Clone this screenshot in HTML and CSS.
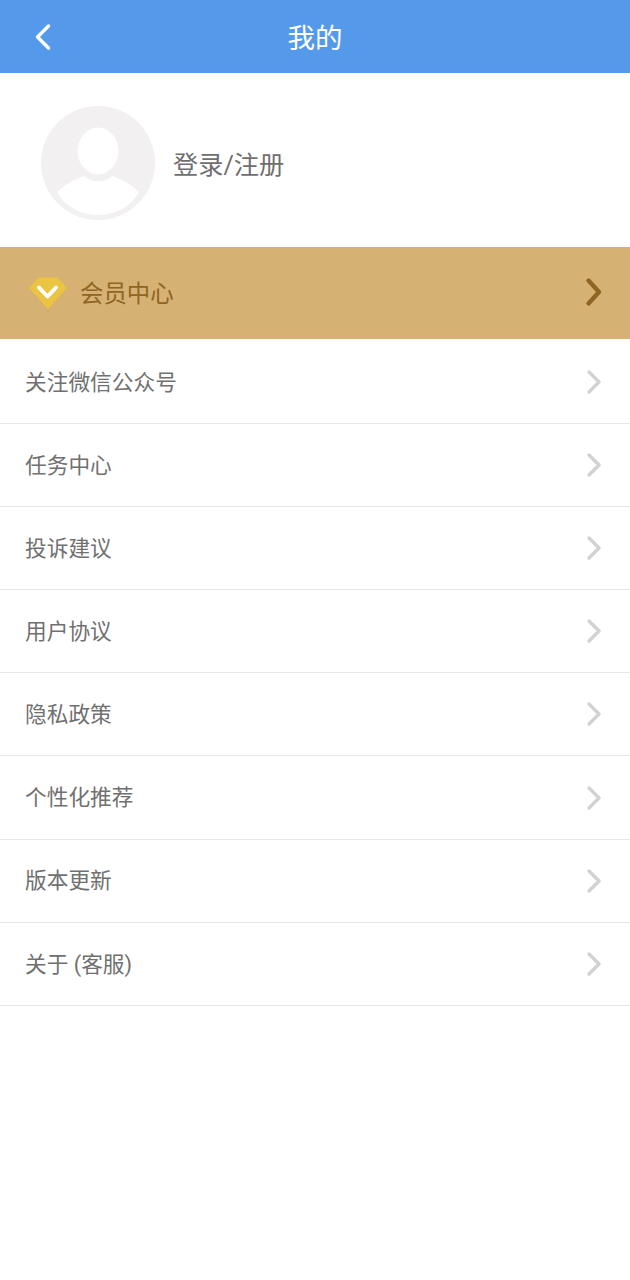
FILE: index.html
```html
<!DOCTYPE html>
<html lang="zh">
<head>
  <meta charset="UTF-8">
  <title>我的</title>
  <link rel="stylesheet" href="styles.css">
</head>
<body>

  <header class="topbar">
    <svg class="back" width="18" height="28" viewBox="0 0 18 28">
      <path d="M14.5 3 L3.5 14 L14.5 25" fill="none" stroke="#fff" stroke-width="3.4" stroke-linecap="round" stroke-linejoin="round"/>
    </svg>
    <h1>我的</h1>
  </header>

  <section class="profile">
    <svg class="avatar" width="116" height="116" viewBox="0 0 116 116">
      <circle cx="58" cy="58" r="57" fill="#f2f0f0"/>
      <ellipse cx="58" cy="46" rx="20.5" ry="23.5" fill="#fff"/>
      <path d="M17 87 C25 79 35 74 44 71 C50 78 66 78 72 71 C81 74 91 79 99 87 C91 102 75 110 58 110 C41 110 25 102 17 87 Z" fill="#fff"/>
    </svg>
    <span class="login">登录/注册</span>
  </section>

  <a class="vip">
    <svg class="vip-icon" width="38" height="32" viewBox="0 0 38 32">
      <path d="M10 1.5 H28 L36.5 11 L19 30.5 L1.5 11 Z" fill="#ecc443" stroke="#ecc443" stroke-width="2" stroke-linejoin="round"/>
      <path d="M10 10.5 L18.5 19.5 L27 10.5" fill="none" stroke="#fff" stroke-width="4" stroke-linecap="round" stroke-linejoin="round"/>
    </svg>
    <span class="vip-text">会员中心</span>
    <svg class="chev vip-chev" width="18" height="30" viewBox="0 0 18 30">
      <path d="M3.5 3.5 L14 15 L3.5 26.5" fill="none" stroke="#8f6523" stroke-width="4.4" stroke-linecap="round" stroke-linejoin="round"/>
    </svg>
  </a>

  <ul class="menu">
    <li>关注微信公众号<svg class="chev" width="18" height="26" viewBox="0 0 18 26"><path d="M4 3 L14 13 L4 23" fill="none" stroke="#d2d2d2" stroke-width="3.4" stroke-linecap="round" stroke-linejoin="round"/></svg></li>
    <li>任务中心<svg class="chev" width="18" height="26" viewBox="0 0 18 26"><path d="M4 3 L14 13 L4 23" fill="none" stroke="#d2d2d2" stroke-width="3.4" stroke-linecap="round" stroke-linejoin="round"/></svg></li>
    <li>投诉建议<svg class="chev" width="18" height="26" viewBox="0 0 18 26"><path d="M4 3 L14 13 L4 23" fill="none" stroke="#d2d2d2" stroke-width="3.4" stroke-linecap="round" stroke-linejoin="round"/></svg></li>
    <li>用户协议<svg class="chev" width="18" height="26" viewBox="0 0 18 26"><path d="M4 3 L14 13 L4 23" fill="none" stroke="#d2d2d2" stroke-width="3.4" stroke-linecap="round" stroke-linejoin="round"/></svg></li>
    <li>隐私政策<svg class="chev" width="18" height="26" viewBox="0 0 18 26"><path d="M4 3 L14 13 L4 23" fill="none" stroke="#d2d2d2" stroke-width="3.4" stroke-linecap="round" stroke-linejoin="round"/></svg></li>
    <li>个性化推荐<svg class="chev" width="18" height="26" viewBox="0 0 18 26"><path d="M4 3 L14 13 L4 23" fill="none" stroke="#d2d2d2" stroke-width="3.4" stroke-linecap="round" stroke-linejoin="round"/></svg></li>
    <li>版本更新<svg class="chev" width="18" height="26" viewBox="0 0 18 26"><path d="M4 3 L14 13 L4 23" fill="none" stroke="#d2d2d2" stroke-width="3.4" stroke-linecap="round" stroke-linejoin="round"/></svg></li>
    <li>关于 (客服)<svg class="chev" width="18" height="26" viewBox="0 0 18 26"><path d="M4 3 L14 13 L4 23" fill="none" stroke="#d2d2d2" stroke-width="3.4" stroke-linecap="round" stroke-linejoin="round"/></svg></li>
  </ul>

</body>
</html>
```

FILE: styles.css
```css
body {
  margin: 0;
  background: #fff;
  font-family: "Roboto", "Noto Sans CJK SC", sans-serif;
  color: #707070;
}

.topbar {
  height: 73px;
  background: #5599ea;
  display: flex;
  align-items: center;
  justify-content: center;
  position: relative;
}
.topbar h1 {
  margin: 0 0 2px;
  font-size: 27.5px;
  font-weight: 400;
  color: #fff;
}
.back { position: absolute; left: 34px; top: 23px; }

.profile {
  height: 174px;
  box-sizing: border-box;
  padding: 6px 0 0 40px;
  display: flex;
  align-items: center;
}
.avatar { flex-shrink: 0; }
.login { margin-left: 17px; font-size: 25.2px; color: #6f6f6f; }

.vip {
  height: 92px;
  margin-bottom: 2px;
  background: #d5b173;
  display: flex;
  align-items: center;
  padding: 0 27px 0 29px;
}
.vip-text { margin: 0 0 2px 13px; font-size: 23.4px; color: #8f6523; }
.chev { margin-left: auto; flex-shrink: 0; margin-top: 3.4px; }
.vip-chev { margin-top: 0; margin-bottom: 2px; }

.menu { list-style: none; margin: 0; padding: 0; }
.menu li {
  height: 83.1px;
  box-sizing: border-box;
  border-bottom: 1px solid #e8e8e8;
  padding: 0 27px 3.4px 25px;
  display: flex;
  align-items: center;
  font-size: 21.7px;
}
```
